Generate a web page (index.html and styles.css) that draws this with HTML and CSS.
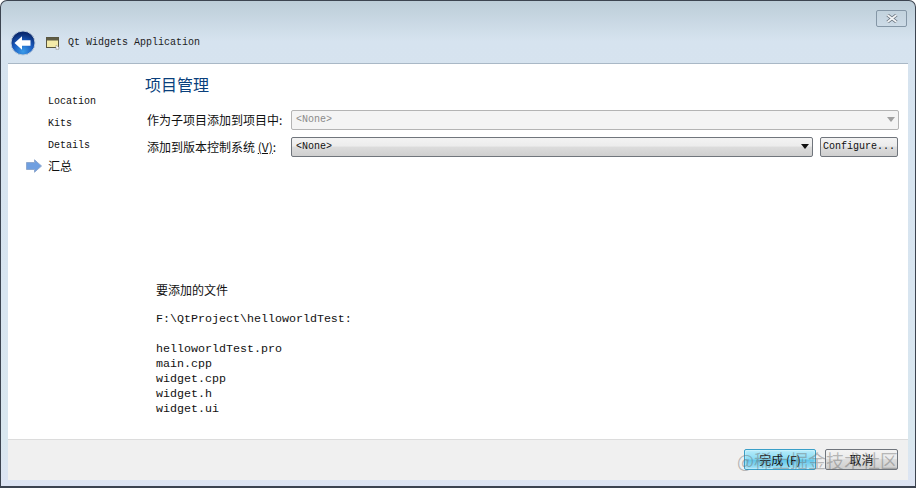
FILE: index.html
```html
<!DOCTYPE html>
<html lang="zh-CN">
<head>
    <meta charset="UTF-8">
    <title>Qt Widgets Application</title>
    <link rel="stylesheet" href="styles.css">
</head>
<body>
    <div class="window">
        <div class="title-bar">
            <button class="close-btn" aria-label="close">
                <svg width="12" height="9" viewBox="0 0 12 9"><path d="M1.5 1 L10.5 8 M10.5 1 L1.5 8" stroke="#6b7580" stroke-width="3.4"/><path d="M1.5 1 L10.5 8 M10.5 1 L1.5 8" stroke="#f4f6f8" stroke-width="1.6"/></svg>
            </button>
            <div class="wizard-head">
                <svg class="back-icon" width="26" height="26" viewBox="0 0 26 26">
                    <defs>
                        <radialGradient id="orb" cx="50%" cy="85%" r="75%">
                            <stop offset="0" stop-color="#3a9be8"/>
                            <stop offset="0.55" stop-color="#1a5cc0"/>
                            <stop offset="1" stop-color="#0a2a70"/>
                        </radialGradient>
                    </defs>
                    <circle cx="13" cy="13" r="12" fill="url(#orb)" stroke="#b9c9da"/>
                    <path d="M4.5 13 L12 6.2 V10.2 H20.5 V15.8 H12 V19.8 Z" fill="#fff"/>
                </svg>
                <svg class="app-icon" width="14" height="14" viewBox="0 0 14 14">
                    <rect x="0.5" y="1.5" width="12" height="10" fill="#f3eaa8" stroke="#59563f"/>
                    <rect x="1" y="2" width="11" height="2.5" fill="#5f5c45"/>
                    <path d="M10 9 L13.5 12 L12 12.4 L12.6 13.8 L11.6 14 L11 12.8 L10 13.6 Z" fill="#fff" stroke="#8c8c8c" stroke-width="0.5"/>
                </svg>
                <span class="app-name">Qt Widgets Application</span>
            </div>
        </div>

        <div class="main">
            <ul class="steps">
                <li>Location</li>
                <li>Kits</li>
                <li>Details</li>
                <li class="current">
                    <svg class="step-arrow" width="16" height="14" viewBox="0 0 16 14"><path d="M0.5 3.5 H8.5 V0.8 L15.5 7 L8.5 13.2 V10.5 H0.5 Z" fill="#6f9fe0" stroke="#8fa9cf"/></svg>
                    汇总
                </li>
            </ul>

            <div class="page">
                <h1>项目管理</h1>
                <div class="form-row">
                    <label>作为子项目添加到项目中:</label>
                    <div class="combo disabled"><span>&lt;None&gt;</span><i class="caret"></i></div>
                </div>
                <div class="form-row">
                    <label>添加到版本控制系统 <u>(V)</u>:</label>
                    <div class="combo"><span>&lt;None&gt;</span><i class="caret"></i></div>
                    <button class="btn configure">Configure...</button>
                </div>
                <div class="files">
                    <p class="files-title">要添加的文件</p>
                    <pre>F:\QtProject\helloworldTest:

helloworldTest.pro
main.cpp
widget.cpp
widget.h
widget.ui</pre>
                </div>
            </div>
        </div>

        <div class="footer">
            <button class="btn finish">完成 (F)</button>
            <button class="btn cancel">取消</button>
            <span class="watermark">@稀土掘金技术社区</span>
        </div>
    </div>
</body>
</html>
```
FILE: styles.css
```css
html, body {
    margin: 0;
    padding: 0;
}

body {
    width: 916px;
    height: 488px;
    overflow: hidden;
    background: #fff;
    font-family: "Noto Sans CJK SC", "Liberation Sans", sans-serif;
    font-size: 12px;
    color: #111;
}

.window {
    box-sizing: border-box;
    height: 488px;
    display: flex;
    flex-direction: column;
    padding: 0 7px 6px 7px;
    border: 1px solid #3c4450;
    border-bottom-width: 2px;
    border-radius: 7px 7px 0 0;
    background: linear-gradient(180deg, #bccdd8 0, #d6e3ef 40px, #d8e5f0 300px, #d9e7ef 440px, #dde4f3 100%);
}

.title-bar {
    height: 62px;
    flex-shrink: 0;
    position: relative;
}

.close-btn {
    position: absolute;
    top: 9px;
    right: 1px;
    box-sizing: border-box;
    width: 31px;
    height: 17px;
    padding: 0;
    display: flex;
    align-items: center;
    justify-content: center;
    background: transparent;
    border: 1px solid #8496a6;
    border-radius: 2px;
}

.wizard-head {
    display: flex;
    align-items: center;
    padding-top: 29px;
    margin-left: 2px;
}

.app-icon {
    margin-left: 10px;
}

.app-name {
    margin-left: 8px;
    margin-top: -2px;
    font-family: "Liberation Mono", monospace;
    font-size: 10px;
    color: #1c1c1c;
}

.main {
    flex: 1;
    display: flex;
    background: #fff;
    border-top: 1px solid #a9b8c6;
    min-height: 0;
}

.steps {
    list-style: none;
    margin: 0;
    padding: 28px 0 0 40px;
    width: 97px;
    font-family: "Liberation Mono", monospace;
    font-size: 10px;
}

.steps li {
    height: 22px;
    line-height: 20px;
    position: relative;
}

.steps li.current {
    margin-top: -2px;
    font-family: "Noto Sans CJK SC", sans-serif;
    font-size: 12px;
}

.step-arrow {
    position: absolute;
    left: -22px;
    top: 3px;
}

.page {
    flex: 1;
    min-width: 0;
}

h1 {
    margin: 8px 0 0;
    font-size: 16px;
    font-weight: normal;
    line-height: 24px;
    color: #0a3f7c;
}

.form-row {
    display: flex;
    align-items: center;
    height: 21px;
    margin-top: 6px;
    padding-left: 2px;
}

h1 + .form-row {
    margin-top: 13px;
}

.form-row label {
    width: 144px;
    flex-shrink: 0;
    line-height: 20px;
    white-space: nowrap;
}

.form-row u {
    text-decoration: underline;
    text-underline-offset: 1px;
}

.combo {
    flex: 1;
    box-sizing: border-box;
    height: 20px;
    display: flex;
    align-items: center;
    justify-content: space-between;
    padding: 0 3px 0 4px;
    margin-right: 7px;
    border: 1px solid #70757c;
    border-radius: 2px;
    background: linear-gradient(180deg, #f3f3f3 0, #ececec 45%, #dcdcdc 50%, #cfcfcf 100%);
    font-family: "Liberation Mono", monospace;
    font-size: 10px;
}

.combo.disabled {
    border-color: #b4b4b4;
    background: #f4f4f4;
    color: #8a8a8a;
    margin-right: 9px;
}

.caret {
    width: 0;
    height: 0;
    border-left: 4px solid transparent;
    border-right: 4px solid transparent;
    border-top: 5px solid #111;
}

.combo.disabled .caret {
    border-top-color: #a0a0a0;
}

.btn {
    box-sizing: border-box;
    height: 20px;
    padding: 0;
    border: 1px solid #70757c;
    border-radius: 2px;
    background: linear-gradient(180deg, #f3f3f3 0, #ebebeb 45%, #dddddd 50%, #cfcfcf 100%);
    color: #111;
    font-family: "Liberation Mono", monospace;
    font-size: 10px;
}

.configure {
    width: 78px;
    flex-shrink: 0;
    margin-right: 10px;
}

.files {
    margin: 124px 0 0 11px;
}

.files-title {
    margin: 0;
    line-height: 18px;
}

.files pre {
    margin: 13px 0 0;
    font-family: "Liberation Mono", monospace;
    font-size: 11.67px;
    line-height: 15px;
    color: #111;
}

.footer {
    height: 41px;
    flex-shrink: 0;
    box-sizing: border-box;
    position: relative;
    display: flex;
    justify-content: flex-end;
    align-items: flex-start;
    gap: 9px;
    padding: 9px 10px 0 0;
    background: #f0f0f0;
    border-top: 1px solid #dcdcdc;
}

.footer .btn {
    width: 72px;
    height: 21px;
    font-family: "Noto Sans CJK SC", sans-serif;
    font-size: 12px;
}

.footer .cancel {
    width: 73px;
}

.footer .finish {
    border-color: #3a9fc8;
    background: linear-gradient(180deg, #b6ecfb 0, #8ddcf4 45%, #63c6ea 55%, #a5e4f8 100%);
    box-shadow: inset 0 0 2px #fff;
}

.watermark {
    position: absolute;
    right: 10px;
    top: 8px;
    font-size: 18px;
    line-height: 24px;
    color: rgba(110, 110, 110, 0.45);
    white-space: nowrap;
}
```
